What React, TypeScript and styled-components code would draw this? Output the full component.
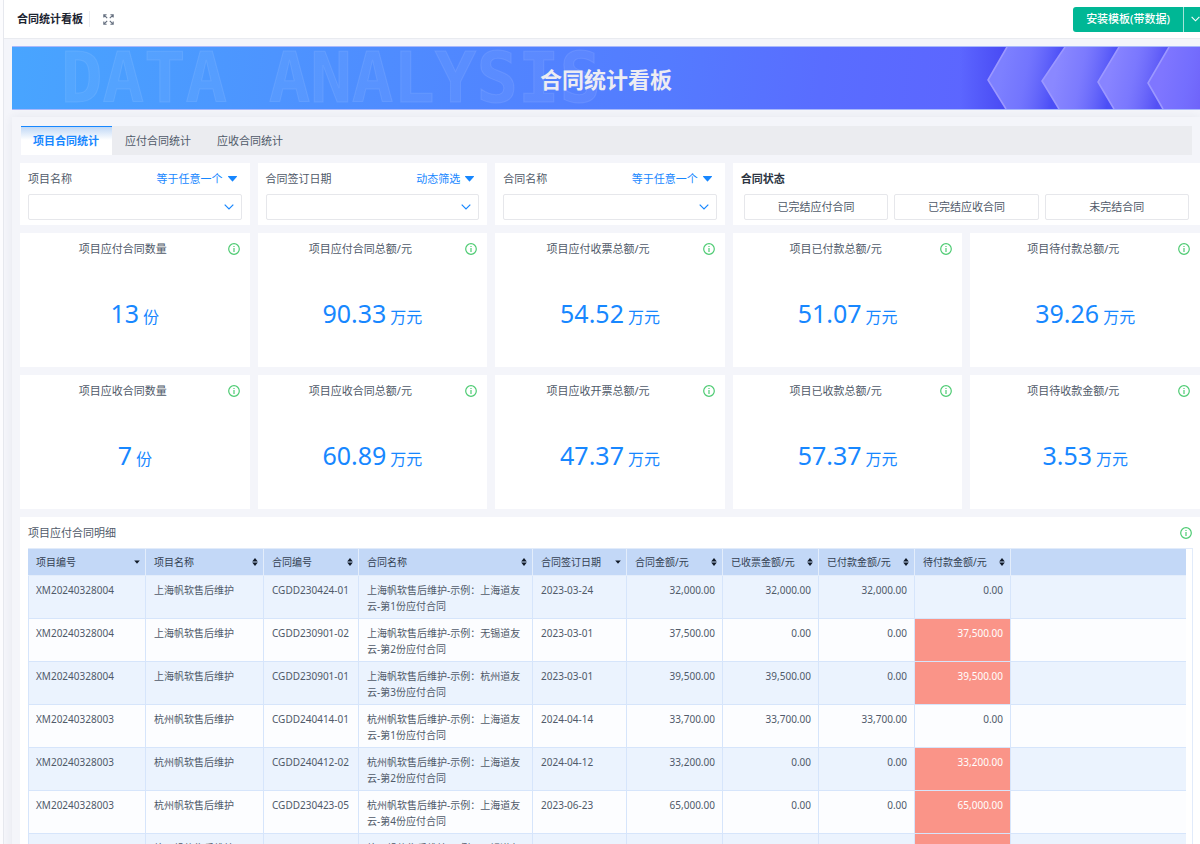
import React from 'react';
import styled, { createGlobalStyle, css } from 'styled-components';

const GlobalStyle = createGlobalStyle`
  *, *::before, *::after { box-sizing: border-box; }
  html, body { margin: 0; padding: 0; }
  body {
    background: #fff;
    color: #505a69;
    font-family: "Noto Sans", "Noto Sans CJK SC", sans-serif;
    font-size: 11px;
    line-height: 16px;
  }
  button, select { font: inherit; color: inherit; }
  h1, h2, h3, p { margin: 0; font: inherit; }
`;

const Shell = styled.div`
  height: 100vh;
  padding-left: 3px;
  background: #fcfcfe;
`;

const Page = styled.div`
  height: 100%;
  display: flex;
  flex-direction: column;
  border-left: 1px solid #e6e8ee;
  background: #f4f5fa;
`;

const TopBar = styled.header`
  flex: none;
  display: flex;
  align-items: center;
  height: 39px;
  padding-left: 13px;
  border-bottom: 1px solid #e9ebf0;
  background: #fff;
`;

const PageTitle = styled.h1`
  padding-right: 6px;
  border-right: 1px solid #e9ebf0;
  color: #1b2330;
  font-weight: 700;
`;

const IconButton = styled.button`
  display: flex;
  margin-left: 13px;
  padding: 0;
  border: 0;
  background: none;
  color: #667080;
`;

const InstallGroup = styled.div`
  display: flex;
  height: 25px;
  margin-left: auto;
  border-radius: 3px 0 0 3px;
  overflow: hidden;
`;

const InstallButton = styled.button`
  padding: 0 13px;
  border: 0;
  background: #00b795;
  color: #fff;
  font-weight: 500;
`;

const InstallMore = styled.button`
  display: flex;
  align-items: center;
  width: 17px;
  padding: 0 0 0 7px;
  border: 0;
  border-left: 1px solid #a5e5d9;
  background: #00b795;
  color: #fff;
  overflow: hidden;
`;

const Scroll = styled.main`
  flex: 1;
  min-height: 0;
  overflow: hidden auto;
  scrollbar-width: none;
  padding: 7px 0 8px 8px;
`;

const Banner = styled.section`
  position: relative;
  display: flex;
  align-items: center;
  justify-content: center;
  height: 64px;
  overflow: hidden;
  border-top: 1px solid #a9b8fb;
  border-bottom: 1px solid #a9b8fb;
  background: linear-gradient(97deg, #48a5ff 0%, #4d94ff 22%, #5087ff 38%, #547bff 55%, #596dff 68%, #5c66ff 80%);
`;

const BannerGhost = styled.span`
  position: absolute;
  left: 49px;
  top: 0;
  color: rgba(255, 255, 255, 0.06);
  -webkit-text-stroke: 1px rgba(255, 255, 255, 0.09);
  font: 700 69px/62px "DejaVu Sans Mono", monospace;
  white-space: nowrap;
`;

const BannerArt = styled.svg`
  position: absolute;
  right: 0;
  top: 0;
`;

const BannerTitle = styled.h2`
  position: relative;
  padding-top: 2px;
  color: #ececf2;
  font-size: 22px;
  font-weight: 700;
  line-height: 32px;
`;

const Board = styled.section`
  display: flex;
  flex-direction: column;
  gap: 8px;
  margin-top: 7px;
  padding: 9px 0 0 8px;
  background: #f4f5fa;
  box-shadow: 0 0 9px rgba(40, 50, 90, 0.07);
`;

const Tabs = styled.div`
  display: flex;
  gap: 1px;
  height: 29px;
  margin: 0 8px 0 1px;
  background: #ebecf0;
`;

const Tab = styled.button<{ $active?: boolean }>`
  padding: 0 13px 0 12px;
  border: 0;
  background: none;
  ${({ $active }) =>
    $active &&
    css`
      border-top: 1px solid #1787ff;
      background: linear-gradient(#c0d8f6, #fff 13px);
      color: #1787ff;
      font-weight: 700;
    `}
`;

const Grid = styled.div`
  display: grid;
  grid-template-columns: repeat(5, 1fr);
  gap: 8px;
`;

const FilterCard = styled.div<{ $wide?: boolean }>`
  grid-column: span ${({ $wide }) => ($wide ? 2 : 1)};
  display: flex;
  flex-direction: column;
  gap: 7px;
  padding: 8px 8px 5px;
  background: #fff;
`;

const FilterHead = styled.div`
  display: flex;
  justify-content: space-between;
  padding-right: 5px;
`;

const FilterMode = styled.button`
  display: flex;
  align-items: center;
  gap: 5px;
  padding: 0;
  border: 0;
  background: none;
  color: #1787ff;
`;

const StatusTitle = styled.h3`
  color: #2b3442;
  font-weight: 700;
`;

const SelectBox = styled.div`
  display: grid;
  align-items: center;
  & > * { grid-area: 1 / 1; }
  & > svg { justify-self: end; margin-right: 8px; color: #1787ff; pointer-events: none; }
`;

const Select = styled.select`
  width: 100%;
  height: 26px;
  padding: 0 24px 0 8px;
  appearance: none;
  border: 1px solid #e6e7eb;
  border-radius: 2px;
  background: #fff;
`;

const StatusButtons = styled.div`
  display: grid;
  grid-template-columns: repeat(3, 1fr);
  gap: 6px;
  padding: 0 3px;
`;

const StatusButton = styled.button`
  height: 26px;
  padding: 0;
  border: 1px solid #e6e7eb;
  border-radius: 2px;
  background: #fff;
`;

const KpiCard = styled.article`
  display: flex;
  flex-direction: column;
  height: 134px;
  padding: 8px 10px 0 8px;
  background: #fff;
`;

const KpiHead = styled.div`
  display: flex;
  align-items: center;
  gap: 10px;
`;

const KpiTitle = styled.h3`
  flex: 1;
  text-align: center;
`;

const KpiValue = styled.p`
  padding: 40px 0 0 2px;
  color: #1787ff;
  font-size: 25px;
  line-height: 32px;
  text-align: center;
`;

const KpiUnit = styled.span`
  margin-left: 4px;
  font-size: 16px;
`;

const TableCard = styled.section`
  padding: 8px 7px 8px 8px;
  background: #fff;
`;

const TableHead = styled.div`
  display: flex;
  align-items: center;
  justify-content: space-between;
  height: 16px;
  margin-bottom: 7px;
  padding-right: 1px;
`;

const TableFrame = styled.div`
  padding-right: 6px;
  border: 1px solid #e1ebfa;
  border-width: 1px 1px 0 0;
`;

const Table = styled.table`
  width: 100%;
  table-layout: fixed;
  border-collapse: separate;
  border-spacing: 0;
  font-size: 10px;
`;

const HeadCell = styled.th`
  height: 27px;
  padding: 0 5px 0 8px;
  border-right: 1px solid #e3edfb;
  border-bottom: 1px solid #e3edfb;
  background: #c3d8f7;
  color: #333f52;
  font-weight: 400;
  text-align: left;
  white-space: nowrap;
  &:last-child { border-right: 0; }
`;

const SortButton = styled.button`
  display: flex;
  align-items: center;
  justify-content: space-between;
  width: 100%;
  padding: 0;
  border: 0;
  background: none;
  svg { color: #111a28; }
`;

const Row = styled.tr`
  background: #fcfdff;
  &:nth-child(odd) { background: #ebf3fe; }
`;

const Cell = styled.td<{ $number?: boolean; $alert?: boolean }>`
  height: 43px;
  padding: 6px 7px 4px 8px;
  border-right: 1px solid #d6e5fb;
  border-bottom: 1px solid #d6e5fb;
  vertical-align: top;
  text-align: ${({ $number }) => ($number ? 'right' : 'left')};
  ${({ $alert }) =>
    $alert &&
    css`
      background: #fa9488;
      color: #fff;
    `}
  &:first-child { border-left: 1px solid #d6e5fb; padding-left: 7px; }
  &:last-child { border-right: 0; }
`;

const Chevron = () => (
  <svg width="10" height="6" viewBox="0 0 10 6" fill="none" stroke="currentColor" strokeWidth="1.2" aria-hidden="true">
    <path d="M0.7 0.7L5 5L9.3 0.7" />
  </svg>
);

const Caret = () => (
  <svg width="9" height="6" viewBox="0 0 9 6" fill="currentColor" aria-hidden="true">
    <path d="M0.4 0h8.2a.4.4 0 0 1 .3.7L4.9 5.3a.5.5 0 0 1-.8 0L.1.7A.4.4 0 0 1 .4 0z" />
  </svg>
);

const InfoIcon = () => (
  <svg width="12" height="12" viewBox="0 0 12 12" fill="none" stroke="#4ecb73" role="img" aria-label="说明">
    <circle cx="6" cy="6" r="5.3" strokeWidth="1.2" />
    <path d="M6 5v4" strokeWidth="1.2" />
    <path d="M6 2.9v1.2" strokeWidth="1.2" />
  </svg>
);

const FullscreenIcon = () => (
  <svg width="11" height="11" viewBox="0 0 11 11" fill="none" stroke="currentColor" strokeWidth="1.1" aria-hidden="true">
    <path d="M.8 3.6V.8h2.8M1 1l3.2 3.2M7.4.8h2.8v2.8M10 1L6.8 4.2M10.2 7.4v2.8H7.4M10 10L6.8 6.8M3.6 10.2H.8V7.4M1 10l3.2-3.2" />
  </svg>
);

const SortIcon = ({ single }: { single?: boolean }) => (
  <svg width="6" height="8" viewBox="0 0 6 8" fill="currentColor" aria-hidden="true">
    {single ? <path d="M.2 2.6h5.6L3 5.8z" /> : <path d="M3 0l2.8 3.4H.2zM.2 4.6h5.6L3 8z" />}
  </svg>
);

const arrows = [
  { top: 47, tip: 28, tipY: 33, bottom: 46, end: 96, light: '#7d80ff', dark: '#4b4ef6' },
  { top: 105, tip: 82, tipY: 34, bottom: 99, end: 152, light: '#8a88ff', dark: '#4b4ef6' },
  { top: 159, tip: 138, tipY: 35, bottom: 154, end: 202, light: '#8884ff', dark: '#5350f5' },
  { top: 209, tip: 188, tipY: 36, bottom: 203, end: 260, light: '#7f76ff', dark: '#6656f4' },
];

const Arrows = () => (
  <BannerArt width="240" height="62" viewBox="0 0 240 62" fill="none" aria-hidden="true">
    <defs>
      <linearGradient id="lead" gradientUnits="userSpaceOnUse" x1="0" x2="44" y1="0" y2="0">
        <stop offset="0" stopColor="#4646f2" stopOpacity="0" />
        <stop offset="1" stopColor="#4646f2" stopOpacity="0.85" />
      </linearGradient>
      {arrows.map((a, i) => (
        <linearGradient key={i} id={`arrow${i}`} gradientUnits="userSpaceOnUse" x1={a.tip} x2={a.end} y1="20" y2="34">
          <stop offset="0.2" stopColor={a.light} />
          <stop offset="0.55" stopColor={a.light} stopOpacity="0.7" />
          <stop offset="1" stopColor={a.dark} />
        </linearGradient>
      ))}
    </defs>
    <path d="M0 0H47L28 33L46 62H0z" fill="url(#lead)" />
    {arrows.map((a, i) => (
      <g key={i}>
        <path d={`M${a.top} 0H240V62H${a.bottom}L${a.tip} ${a.tipY}z`} fill="#5c5cfb" />
        <path d={`M${a.top} 0H240V62H${a.bottom}L${a.tip} ${a.tipY}z`} fill={`url(#arrow${i})`} />
        <path d={`M${a.top} 0L${a.tip} ${a.tipY}L${a.bottom} 62`} stroke="#9c98ff" strokeWidth="1.6" />
      </g>
    ))}
  </BannerArt>
);

const filters = [
  { id: 'project', label: '项目名称', mode: '等于任意一个' },
  { id: 'signed', label: '合同签订日期', mode: '动态筛选' },
  { id: 'contract', label: '合同名称', mode: '等于任意一个' },
];

const statuses = ['已完结应付合同', '已完结应收合同', '未完结合同'];

const kpis = [
  ['项目应付合同数量', '13', '份'],
  ['项目应付合同总额/元', '90.33', '万元'],
  ['项目应付收票总额/元', '54.52', '万元'],
  ['项目已付款总额/元', '51.07', '万元'],
  ['项目待付款总额/元', '39.26', '万元'],
  ['项目应收合同数量', '7', '份'],
  ['项目应收合同总额/元', '60.89', '万元'],
  ['项目应收开票总额/元', '47.37', '万元'],
  ['项目已收款总额/元', '57.37', '万元'],
  ['项目待收款金额/元', '3.53', '万元'],
];

const columns = [
  { title: '项目编号', width: 118, single: true },
  { title: '项目名称', width: 118 },
  { title: '合同编号', width: 95 },
  { title: '合同名称', width: 174 },
  { title: '合同签订日期', width: 94, single: true },
  { title: '合同金额/元', width: 96 },
  { title: '已收票金额/元', width: 96 },
  { title: '已付款金额/元', width: 96 },
  { title: '待付款金额/元', width: 96 },
];

const rows = [
  ['XM20240328004', '上海帆软售后维护', 'CGDD230424-01', '上海帆软售后维护-示例：上海道友云-第1份应付合同', '2023-03-24', '32,000.00', '32,000.00', '32,000.00', '0.00'],
  ['XM20240328004', '上海帆软售后维护', 'CGDD230901-02', '上海帆软售后维护-示例：无锡道友云-第2份应付合同', '2023-03-01', '37,500.00', '0.00', '0.00', '37,500.00'],
  ['XM20240328004', '上海帆软售后维护', 'CGDD230901-01', '上海帆软售后维护-示例：杭州道友云-第3份应付合同', '2023-03-01', '39,500.00', '39,500.00', '0.00', '39,500.00'],
  ['XM20240328003', '杭州帆软售后维护', 'CGDD240414-01', '杭州帆软售后维护-示例：上海道友云-第1份应付合同', '2024-04-14', '33,700.00', '33,700.00', '33,700.00', '0.00'],
  ['XM20240328003', '杭州帆软售后维护', 'CGDD240412-02', '杭州帆软售后维护-示例：上海道友云-第2份应付合同', '2024-04-12', '33,200.00', '0.00', '0.00', '33,200.00'],
  ['XM20240328003', '杭州帆软售后维护', 'CGDD230423-05', '杭州帆软售后维护-示例：上海道友云-第4份应付合同', '2023-06-23', '65,000.00', '0.00', '0.00', '65,000.00'],
  ['XM20240328003', '杭州帆软售后维护', 'CGDD230423-04', '杭州帆软售后维护-示例：无锡道友云-第3份应付合同', '2023-04-23', '42,000.00', '0.00', '0.00', '42,000.00'],
];

export default function App() {
  return (
    <Shell>
      <GlobalStyle />
      <Page>
        <TopBar>
          <PageTitle>合同统计看板</PageTitle>
          <IconButton type="button" aria-label="全屏">
            <FullscreenIcon />
          </IconButton>
          <InstallGroup>
            <InstallButton type="button">安装模板(带数据)</InstallButton>
            <InstallMore type="button" aria-label="更多安装选项">
              <Chevron />
            </InstallMore>
          </InstallGroup>
        </TopBar>
        <Scroll>
          <Banner>
            <BannerGhost aria-hidden="true">DATA ANALYSIS</BannerGhost>
            <Arrows />
            <BannerTitle>合同统计看板</BannerTitle>
          </Banner>
          <Board>
            <Tabs role="tablist">
              <Tab type="button" role="tab" aria-selected="true" $active>项目合同统计</Tab>
              <Tab type="button" role="tab" aria-selected="false">应付合同统计</Tab>
              <Tab type="button" role="tab" aria-selected="false">应收合同统计</Tab>
            </Tabs>
            <Grid>
              {filters.map((f) => (
                <FilterCard key={f.id}>
                  <FilterHead>
                    <label htmlFor={f.id}>{f.label}</label>
                    <FilterMode type="button" aria-haspopup="listbox">
                      {f.mode}
                      <Caret />
                    </FilterMode>
                  </FilterHead>
                  <SelectBox>
                    <Select id={f.id} defaultValue="">
                      <option value="" />
                    </Select>
                    <Chevron />
                  </SelectBox>
                </FilterCard>
              ))}
              <FilterCard $wide>
                <StatusTitle>合同状态</StatusTitle>
                <StatusButtons>
                  {statuses.map((s) => (
                    <StatusButton key={s} type="button">{s}</StatusButton>
                  ))}
                </StatusButtons>
              </FilterCard>
              {kpis.map(([title, value, unit]) => (
                <KpiCard key={title}>
                  <KpiHead>
                    <KpiTitle>{title}</KpiTitle>
                    <InfoIcon />
                  </KpiHead>
                  <KpiValue>
                    {value}
                    <KpiUnit>{unit}</KpiUnit>
                  </KpiValue>
                </KpiCard>
              ))}
            </Grid>
            <TableCard>
              <TableHead>
                <h3>项目应付合同明细</h3>
                <InfoIcon />
              </TableHead>
              <TableFrame>
                <Table>
                  <colgroup>
                    {columns.map((c) => (
                      <col key={c.title} width={c.width} />
                    ))}
                    <col />
                  </colgroup>
                  <thead>
                    <tr>
                      {columns.map((c) => (
                        <HeadCell key={c.title} scope="col">
                          <SortButton type="button">
                            {c.title}
                            <SortIcon single={c.single} />
                          </SortButton>
                        </HeadCell>
                      ))}
                      <HeadCell as="td" />
                    </tr>
                  </thead>
                  <tbody>
                    {rows.map((row) => (
                      <Row key={row[2]}>
                        {row.map((text, i) => (
                          <Cell key={i} $number={i > 4} $alert={i === 8 && text !== '0.00'}>
                            {text}
                          </Cell>
                        ))}
                        <Cell />
                      </Row>
                    ))}
                  </tbody>
                </Table>
              </TableFrame>
            </TableCard>
          </Board>
        </Scroll>
      </Page>
    </Shell>
  );
}
